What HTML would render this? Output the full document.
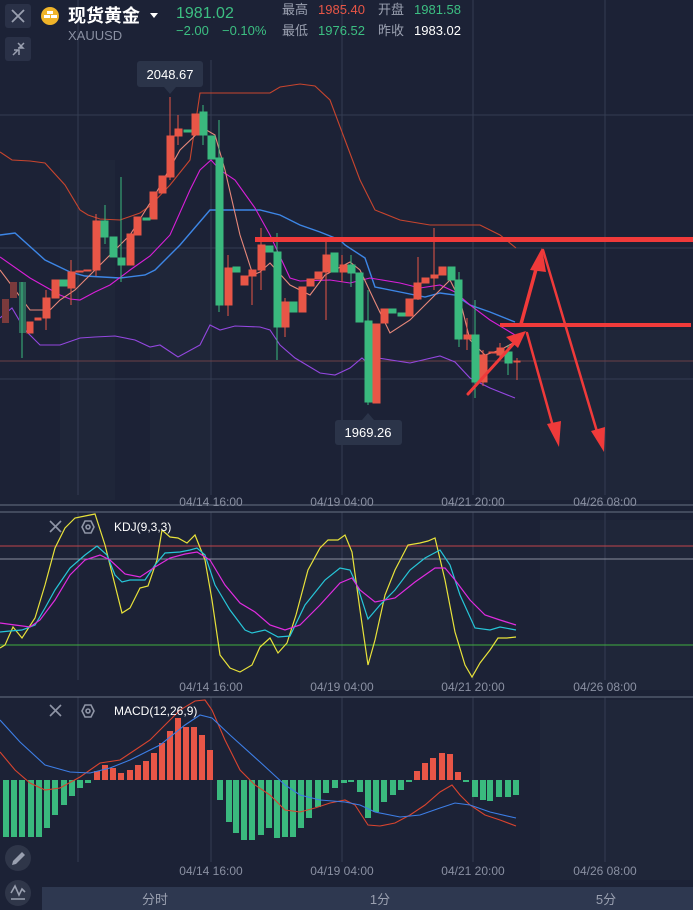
<!DOCTYPE html>
<html><head><meta charset="utf-8"><style>
html,body{margin:0;padding:0;background:#1c2236;width:693px;height:910px;overflow:hidden}
body{font-family:"Liberation Sans","Noto Sans CJK SC",sans-serif}
svg{position:absolute;left:0;top:0}
text{font-family:"Liberation Sans","Noto Sans CJK SC",sans-serif}
</style></head><body>
<svg width="693" height="910" viewBox="0 0 693 910">
<rect width="693" height="910" fill="#1c2236"/>
<g fill="#1f2639">
<rect x="60" y="160" width="55" height="340"/><rect x="150" y="250" width="60" height="250"/>
<rect x="540" y="330" width="150" height="170"/><rect x="480" y="430" width="60" height="70"/>
<rect x="540" y="520" width="150" height="170"/><rect x="300" y="520" width="150" height="170"/>
<rect x="540" y="700" width="150" height="180"/>
</g>
<g stroke="#343c52" stroke-width="1">
<line x1="0" y1="115" x2="693" y2="115"/><line x1="0" y1="248" x2="693" y2="248"/>
<line x1="0" y1="379" x2="693" y2="379"/>
<line x1="78" y1="0" x2="78" y2="495"/><line x1="211" y1="60" x2="211" y2="495"/>
<line x1="342" y1="0" x2="342" y2="495"/><line x1="473" y1="0" x2="473" y2="495"/><line x1="605" y1="0" x2="605" y2="495"/>
<line x1="78" y1="512" x2="78" y2="680"/><line x1="211" y1="512" x2="211" y2="680"/><line x1="342" y1="512" x2="342" y2="680"/><line x1="473" y1="512" x2="473" y2="680"/><line x1="605" y1="512" x2="605" y2="680"/>
<line x1="78" y1="697" x2="78" y2="862"/><line x1="211" y1="697" x2="211" y2="862"/><line x1="342" y1="697" x2="342" y2="862"/><line x1="473" y1="697" x2="473" y2="862"/><line x1="605" y1="697" x2="605" y2="862"/>
</g>
<line x1="0" y1="361" x2="693" y2="361" stroke="#6b4047" stroke-width="1"/>
<g stroke="#5a6275" stroke-width="1.2">
<line x1="0" y1="505" x2="693" y2="505"/><line x1="0" y1="512" x2="693" y2="512"/><line x1="0" y1="697" x2="693" y2="697"/>
</g>
<g fill="none" stroke-width="1.1">
<polyline stroke="#c8452e" points="0,152 12,160 30,161 45,163 65,185 80,210 88,215 100,219 120,220 140,213 150,206 170,185 190,160 200,93 220,93 270,93 280,87 300,84 315,86 330,100 345,140 360,180 375,210 400,220 430,225 460,225 480,225 500,235 516,248"/>
<polyline stroke="#3d86e6" stroke-width="1.4" points="0,235 15,233 45,260 70,272 85,276 120,278 145,275 155,270 180,245 210,210 260,210 280,215 300,225 320,232 340,240 345,245 365,258 375,287 400,292 425,297 440,293 455,295 470,305 490,312 515,322"/>
<polyline stroke="#9447e0" points="0,318 12,308 25,330 40,345 60,345 80,338 95,337 115,336 135,340 150,347 160,345 178,357 200,345 210,325 220,330 235,326 260,327 270,330 280,345 295,358 320,373 335,375 350,368 362,358 370,365 378,358 410,363 440,356 455,362 470,378 490,388 515,398"/>
<polyline stroke="#d81fd8" points="0,257 30,278 60,295 70,299 80,300 95,292 110,285 130,270 150,256 170,235 190,190 200,170 211,160 220,170 235,180 255,208 270,235 290,278 300,281 330,280 350,283 370,278 400,283 420,288 440,285 455,292 470,305 490,320 515,335"/>
<polyline stroke="#e8887a" points="0,270 30,310 50,310 60,300 75,290 90,275 110,255 130,235 155,195 180,150 203,128 215,135 225,170 240,235 253,275 260,272 270,263 290,285 310,295 325,275 350,262 360,270 375,302 390,333 410,320 430,300 450,280 460,300 470,340 485,355 500,350 515,342"/>
</g>
<g>
<g fill="#e85647" stroke="#e85647">
<rect x="2" y="299" width="7" height="24" fill="#7a3a3c" stroke="none"/><rect x="10" y="282" width="7" height="16" fill="#7a3a3c" stroke="none"/>
<rect x="27" y="322" width="6" height="11"/><rect x="35" y="318" width="6" height="2"/><rect x="43" y="298" width="7" height="20"/><rect x="52" y="280" width="7" height="18"/><rect x="68" y="272" width="7" height="16"/><rect x="76" y="271" width="7" height="1"/><rect x="84" y="270" width="7" height="1"/><rect x="93" y="221" width="7" height="49"/><rect x="127" y="234" width="7" height="31"/><rect x="134" y="217" width="7" height="18"/><rect x="150" y="192" width="7" height="27"/><rect x="159" y="176" width="7" height="17"/><rect x="167" y="136" width="7" height="41"/><rect x="175" y="129" width="7" height="7"/><rect x="192" y="114" width="7" height="21"/><rect x="225" y="268" width="7" height="37"/><rect x="241" y="276" width="7" height="9"/><rect x="249" y="270" width="7" height="6"/><rect x="258" y="245" width="7" height="25"/><rect x="282" y="302" width="7" height="25"/><rect x="299" y="287" width="7" height="25"/><rect x="307" y="279" width="7" height="7"/><rect x="315" y="272" width="7" height="7"/><rect x="323" y="255" width="7" height="17"/><rect x="340" y="265" width="7" height="7"/><rect x="373" y="324" width="7" height="79"/><rect x="381" y="309" width="7" height="14"/><rect x="406" y="299" width="7" height="17"/><rect x="414" y="283" width="7" height="16"/><rect x="422" y="278" width="7" height="5"/><rect x="431" y="275" width="7" height="3"/><rect x="439" y="267" width="7" height="8"/><rect x="464" y="335" width="7" height="4"/><rect x="480" y="355" width="7" height="27"/><rect x="489" y="352" width="7" height="1"/><rect x="497" y="348" width="7" height="7"/><rect x="514" y="361" width="6" height="1"/>
</g>
<g stroke="#e85647" stroke-width="1">
<line x1="170" y1="97" x2="170" y2="180"/><line x1="178" y1="115" x2="178" y2="145"/><line x1="228" y1="255" x2="228" y2="316"/><line x1="252" y1="275" x2="252" y2="305"/><line x1="261" y1="228" x2="261" y2="290"/><line x1="285" y1="298" x2="285" y2="337"/><line x1="326" y1="240" x2="326" y2="320"/><line x1="418" y1="257" x2="418" y2="300"/><line x1="342" y1="255" x2="342" y2="282"/><line x1="434" y1="228" x2="434" y2="290"/><line x1="467" y1="318" x2="467" y2="350"/><line x1="483" y1="350" x2="483" y2="386"/><line x1="500" y1="343" x2="500" y2="358"/><line x1="517" y1="358" x2="517" y2="380"/><line x1="96" y1="214" x2="96" y2="276"/><line x1="71" y1="260" x2="71" y2="305"/><line x1="46" y1="290" x2="46" y2="330"/></g>
<g fill="#3ab97e" stroke="#3ab97e">
<rect x="19" y="282" width="7" height="51" fill="#2d6a5a" stroke="none"/><rect x="60" y="280" width="7" height="6"/><rect x="101" y="221" width="7" height="16"/><rect x="110" y="237" width="7" height="20"/><rect x="118" y="258" width="7" height="7"/><rect x="143" y="218" width="7" height="2"/><rect x="184" y="130" width="7" height="2"/><rect x="200" y="112" width="7" height="23"/><rect x="208" y="136" width="7" height="23"/><rect x="216" y="158" width="7" height="147"/><rect x="233" y="267" width="7" height="5"/><rect x="266" y="246" width="7" height="6"/><rect x="274" y="252" width="7" height="75"/><rect x="290" y="302" width="7" height="10"/><rect x="331" y="253" width="7" height="19"/><rect x="348" y="265" width="7" height="8"/><rect x="356" y="273" width="7" height="49"/><rect x="365" y="321" width="7" height="81"/><rect x="389" y="309" width="7" height="4"/><rect x="398" y="313" width="7" height="3"/><rect x="448" y="267" width="7" height="13"/><rect x="455" y="280" width="7" height="59"/><rect x="472" y="335" width="7" height="47"/><rect x="505" y="352" width="7" height="11"/>
</g>
<g stroke="#3ab97e" stroke-width="1"><line x1="22" y1="282" x2="22" y2="358"/><line x1="105" y1="205" x2="105" y2="244"/><line x1="121" y1="177" x2="121" y2="282"/><line x1="203" y1="105" x2="203" y2="145"/><line x1="219" y1="120" x2="219" y2="312"/><line x1="277" y1="233" x2="277" y2="360"/><line x1="368" y1="290" x2="368" y2="405"/><line x1="351" y1="255" x2="351" y2="287"/><line x1="459" y1="272" x2="459" y2="347"/><line x1="475" y1="300" x2="475" y2="398"/><line x1="508" y1="345" x2="508" y2="375"/></g>
</g>
<g fill="#f03a3a" stroke="none">
<rect x="255" y="237" width="438" height="5"/>
<rect x="500" y="323" width="191" height="4"/>
</g>
<g stroke="#f03a3a" stroke-linecap="round" fill="none">
<line x1="468" y1="394" x2="516" y2="341" stroke-width="3"/>
<line x1="521" y1="324" x2="538" y2="262" stroke-width="3.5"/>
<line x1="527" y1="333" x2="554" y2="430" stroke-width="2.5"/>
<line x1="543" y1="250" x2="598" y2="435" stroke-width="2.5"/>
</g>
<g fill="#f03a3a">
<polygon points="526,331 506,337 518,348"/>
<polygon points="542,248 530,270 546,272"/>
<polygon points="559,447 547,424 561,421"/>
<polygon points="604,452 591,431 605,427"/>
</g>
<rect x="137" y="61" width="66" height="26" rx="3" fill="#2b3449"/><polygon points="164,87 176,87 170,94" fill="#2b3449"/>
<text x="170" y="79" fill="#fff" font-size="13" text-anchor="middle">2048.67</text>
<rect x="335" y="420" width="67" height="25" rx="3" fill="#2b3449"/><polygon points="362,420 374,420 368,413" fill="#2b3449"/>
<text x="368" y="437" fill="#fff" font-size="13" text-anchor="middle">1969.26</text>
<g fill="#8a90a2" font-size="12" text-anchor="middle">
<text x="211" y="506">04/14 16:00</text><text x="342" y="506">04/19 04:00</text><text x="473" y="506">04/21 20:00</text><text x="605" y="506">04/26 08:00</text>
<text x="211" y="691">04/14 16:00</text><text x="342" y="691">04/19 04:00</text><text x="473" y="691">04/21 20:00</text><text x="605" y="691">04/26 08:00</text>
<text x="211" y="875">04/14 16:00</text><text x="342" y="875">04/19 04:00</text><text x="473" y="875">04/21 20:00</text><text x="605" y="875">04/26 08:00</text>
</g>
<line x1="0" y1="546" x2="693" y2="546" stroke="#c0444a"/>
<line x1="0" y1="559" x2="693" y2="559" stroke="#8a8f9d"/>
<line x1="0" y1="645" x2="693" y2="645" stroke="#3fae3f"/>
<g fill="none" stroke-width="1.2">
<polyline stroke="#e8e23a" points="0,648 5,645 13,627 22,638 35,618 45,585 55,548 65,528 75,518 85,516 95,514 105,545 115,585 122,613 130,608 140,588 148,586 157,560 162,530 170,537 178,538 187,543 195,535 205,560 212,600 220,655 230,668 240,672 252,665 260,647 270,638 278,653 287,643 296,615 308,570 320,548 328,540 338,540 345,535 352,552 360,610 368,665 375,640 385,595 395,570 408,545 420,543 428,541 435,538 445,580 455,632 465,665 472,677 480,663 490,650 498,638 507,638 516,637"/>
<polyline stroke="#27c6d8" points="0,632 10,631 22,630 35,625 45,608 55,590 70,568 85,555 97,546 107,555 115,575 122,582 130,580 145,580 155,565 165,553 180,552 190,550 197,548 205,555 215,585 230,610 245,630 252,633 265,630 278,637 290,636 305,605 325,580 340,568 350,570 358,588 368,619 380,605 395,590 410,570 425,558 440,550 450,565 460,595 475,628 490,630 500,627 516,630"/>
<polyline stroke="#e02ce0" points="0,623 15,625 30,627 40,620 55,600 70,575 85,560 100,555 110,560 125,574 140,577 155,567 170,558 185,554 197,552 210,560 225,585 240,603 255,612 270,625 285,630 300,625 320,605 340,583 352,578 360,590 375,602 395,598 415,582 435,568 445,568 455,580 470,600 485,615 500,620 516,625"/>
</g>
<g fill="#e85647">
<rect x="94" y="771" width="6" height="9"/><rect x="102" y="765" width="6" height="15"/><rect x="110" y="768" width="6" height="12"/><rect x="118" y="773" width="6" height="7"/><rect x="127" y="770" width="6" height="10"/><rect x="135" y="765" width="6" height="15"/><rect x="143" y="761" width="6" height="19"/><rect x="151" y="753" width="6" height="27"/><rect x="159" y="743" width="6" height="37"/><rect x="167" y="731" width="6" height="49"/><rect x="175" y="718" width="6" height="62"/><rect x="183" y="727" width="6" height="53"/><rect x="191" y="727" width="6" height="53"/><rect x="199" y="735" width="6" height="45"/><rect x="207" y="750" width="6" height="30"/>
<rect x="414" y="771" width="6" height="9"/><rect x="422" y="763" width="6" height="17"/><rect x="430" y="758" width="6" height="22"/><rect x="439" y="753" width="6" height="27"/><rect x="447" y="754" width="6" height="26"/><rect x="455" y="772" width="6" height="8"/>
</g>
<g fill="#3ab97e">
<rect x="3" y="780" width="6" height="57"/><rect x="11" y="780" width="6" height="57"/><rect x="19" y="780" width="6" height="57"/><rect x="28" y="780" width="6" height="57"/><rect x="36" y="780" width="6" height="57"/><rect x="44" y="780" width="6" height="48"/><rect x="52" y="780" width="6" height="35"/><rect x="61" y="780" width="6" height="25"/><rect x="69" y="780" width="6" height="16"/><rect x="77" y="780" width="6" height="8"/><rect x="85" y="780" width="6" height="3"/>
<rect x="217" y="780" width="6" height="20"/><rect x="226" y="780" width="6" height="42"/><rect x="233" y="780" width="6" height="53"/><rect x="241" y="780" width="6" height="60"/><rect x="249" y="780" width="6" height="60"/><rect x="258" y="780" width="6" height="55"/><rect x="266" y="780" width="6" height="48"/><rect x="274" y="780" width="6" height="58"/><rect x="282" y="780" width="6" height="57"/><rect x="290" y="780" width="6" height="57"/><rect x="298" y="780" width="6" height="48"/><rect x="306" y="780" width="6" height="38"/><rect x="315" y="780" width="6" height="27"/><rect x="323" y="780" width="6" height="13"/><rect x="332" y="780" width="6" height="8"/><rect x="341" y="780" width="6" height="3"/><rect x="348" y="780" width="6" height="2"/><rect x="357" y="780" width="6" height="12"/><rect x="365" y="780" width="6" height="38"/><rect x="373" y="780" width="6" height="32"/><rect x="381" y="780" width="6" height="22"/><rect x="390" y="780" width="6" height="15"/><rect x="398" y="780" width="6" height="10"/><rect x="406" y="780" width="6" height="2"/><rect x="463" y="780" width="6" height="2"/>
<rect x="472" y="780" width="6" height="17"/><rect x="480" y="780" width="6" height="20"/><rect x="487" y="780" width="6" height="21"/><rect x="496" y="780" width="6" height="17"/><rect x="505" y="780" width="6" height="17"/><rect x="513" y="780" width="6" height="15"/>
</g>
<g fill="none" stroke-width="1.1">
<polyline stroke="#d9442f" points="0,752 15,770 30,783 45,790 60,788 80,777 100,763 120,760 135,750 150,740 165,725 180,710 195,701 205,700 212,710 225,740 240,770 255,785 270,795 285,810 300,812 315,808 330,803 345,800 355,805 368,825 380,826 395,823 410,815 425,805 440,792 452,785 460,795 470,805 485,815 500,820 516,826"/>
<polyline stroke="#3d7ee6" points="0,720 20,742 45,765 70,772 90,773 110,768 130,760 160,745 185,725 200,715 212,718 230,735 260,762 285,785 300,795 320,800 345,802 360,805 375,812 400,817 420,815 440,808 455,803 470,805 490,812 516,818"/>
</g>
<g stroke="#8f95a6" stroke-width="1.6" fill="none">
<path d="M50 521 L61 532 M61 521 L50 532"/><path d="M50 705 L61 716 M61 705 L50 716"/>
<polygon points="82,527 85,521 91,521 94,527 91,533 85,533"/><circle cx="88" cy="527" r="2"/>
<polygon points="82,711 85,705 91,705 94,711 91,717 85,717"/><circle cx="88" cy="711" r="2"/>
</g>
<text x="114" y="531" fill="#fff" font-size="12">KDJ(9,3,3)</text>
<text x="114" y="715" fill="#fff" font-size="12">MACD(12,26,9)</text>
<rect x="5" y="4" width="26" height="24" rx="3" fill="#2a3147"/>
<path d="M12 10 L24 22 M24 10 L12 22" stroke="#9aa0b0" stroke-width="1.8"/>
<rect x="5" y="37" width="26" height="24" rx="3" fill="#2a3147"/>
<path d="M13 55 L18 50 M24 43 L19 48 M14 50 L19 50 L19 55 M18 48 L23 48 L18 43" stroke="#9aa0b0" stroke-width="1.5" fill="none"/>
<circle cx="50" cy="16" r="9" fill="#f0b429"/>
<rect x="47" y="11" width="6" height="3" fill="#fff"/><rect x="44" y="15" width="6" height="3" fill="#fff"/><rect x="51" y="15" width="6" height="3" fill="#fff"/>
<text x="68" y="22" fill="#fff" font-size="18" font-weight="bold">现货黄金</text>
<polygon points="150,13 158,13 154,18" fill="#fff"/>
<text x="68" y="40" fill="#8a90a2" font-size="13">XAUUSD</text>
<text x="176" y="18" fill="#3cbf82" font-size="16">1981.02</text>
<text x="176" y="35" fill="#3cbf82" font-size="13">−2.00</text>
<text x="222" y="35" fill="#3cbf82" font-size="13">−0.10%</text>
<g font-size="13">
<text x="282" y="14" fill="#9aa0b0">最高</text><text x="318" y="14" fill="#e85647">1985.40</text>
<text x="378" y="14" fill="#9aa0b0">开盘</text><text x="414" y="14" fill="#3cbf82">1981.58</text>
<text x="282" y="35" fill="#9aa0b0">最低</text><text x="318" y="35" fill="#3cbf82">1976.52</text>
<text x="378" y="35" fill="#9aa0b0">昨收</text><text x="414" y="35" fill="#fff">1983.02</text>
</g>
<circle cx="18" cy="858" r="13" fill="#2f3649"/>
<path d="M12 865 L13 861 L22 852 L25 855 L16 864 Z" fill="#9aa0b0"/>
<circle cx="18" cy="893" r="13" fill="#2f3649"/>
<path d="M11 893 L15 886 L19 895 L22 889 L25 892 M11 899 L25 899" stroke="#9aa0b0" stroke-width="1.6" fill="none"/>
<rect x="42" y="887" width="651" height="23" fill="#2e3850"/>
<g fill="#9aa0b0" font-size="13" text-anchor="middle">
<text x="155" y="904">分时</text><text x="380" y="904">1分</text><text x="606" y="904">5分</text>
</g>
</svg>
</body></html>
